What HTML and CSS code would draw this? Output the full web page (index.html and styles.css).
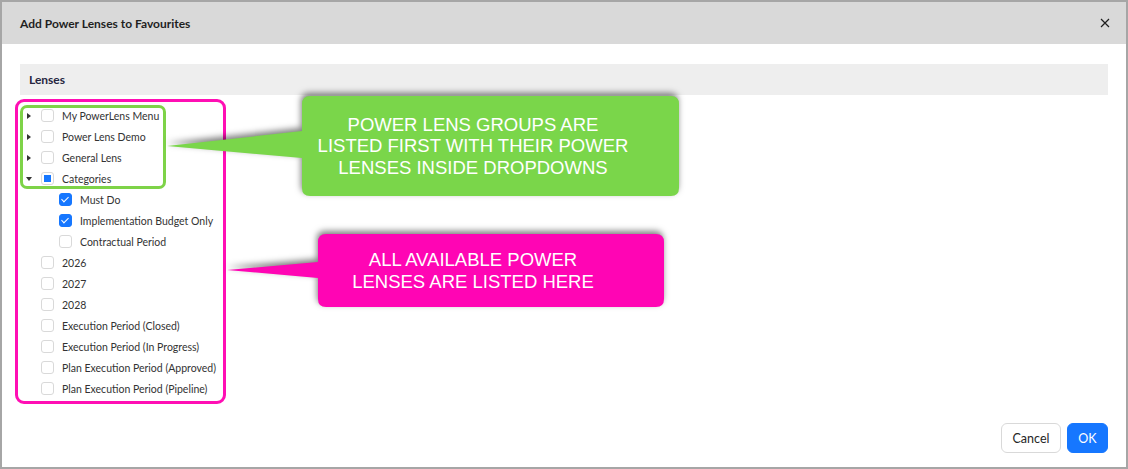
FILE: index.html
```html
<!DOCTYPE html>
<html lang="en">
<head>
    <meta charset="UTF-8">
    <title>Add Power Lenses to Favourites</title>
    <link rel="stylesheet" href="styles.css">
</head>
<body>
    <div class="frame">
        <div class="header">
            <span class="title">Add Power Lenses to Favourites</span>
            <svg class="close" width="10" height="10" viewBox="0 0 10 10">
                <path d="M1 1 L9 9 M9 1 L1 9" stroke="#1f1f1f" stroke-width="1.2" fill="none"/>
            </svg>
        </div>

        <div class="content">
            <div class="section">Lenses</div>

            <ul class="tree">
                <li class="row"><span class="switcher closed"></span><span class="cb"></span><span class="label">My PowerLens Menu</span></li>
                <li class="row"><span class="switcher closed"></span><span class="cb"></span><span class="label">Power Lens Demo</span></li>
                <li class="row"><span class="switcher closed"></span><span class="cb"></span><span class="label">General Lens</span></li>
                <li class="row"><span class="switcher open"></span><span class="cb half"></span><span class="label">Categories</span></li>
                <li class="row child"><span class="switcher"></span><span class="cb checked"></span><span class="label">Must Do</span></li>
                <li class="row child"><span class="switcher"></span><span class="cb checked"></span><span class="label">Implementation Budget Only</span></li>
                <li class="row child"><span class="switcher"></span><span class="cb"></span><span class="label">Contractual Period</span></li>
                <li class="row"><span class="switcher"></span><span class="cb"></span><span class="label">2026</span></li>
                <li class="row"><span class="switcher"></span><span class="cb"></span><span class="label">2027</span></li>
                <li class="row"><span class="switcher"></span><span class="cb"></span><span class="label">2028</span></li>
                <li class="row"><span class="switcher"></span><span class="cb"></span><span class="label">Execution Period (Closed)</span></li>
                <li class="row"><span class="switcher"></span><span class="cb"></span><span class="label">Execution Period (In Progress)</span></li>
                <li class="row"><span class="switcher"></span><span class="cb"></span><span class="label">Plan Execution Period (Approved)</span></li>
                <li class="row"><span class="switcher"></span><span class="cb"></span><span class="label">Plan Execution Period (Pipeline)</span></li>
            </ul>
        </div>

        <div class="footer">
            <button class="btn">Cancel</button>
            <button class="btn primary">OK</button>
        </div>

        <!-- annotations drawn over the dialog -->
        <div class="mark mark-all"></div>
        <div class="mark mark-groups"></div>

        <svg class="callout-shape" width="1128" height="469" viewBox="0 0 1128 469">
            <path class="shape-green" d="M167 146 L302 131 L302 104 Q302 96 310 96 L671 96 Q679 96 679 104 L679 188 Q679 196 671 196 L310 196 Q302 196 302 188 L302 158 Z"/>
            <path class="shape-pink" d="M227 270 L318 262 L318 242 Q318 234 326 234 L656 234 Q664 234 664 242 L664 299 Q664 307 656 307 L326 307 Q318 307 318 299 L318 278 Z"/>
        </svg>
        <div class="callout-text green-text">POWER LENS GROUPS ARE<br>LISTED FIRST WITH THEIR POWER<br>LENSES INSIDE DROPDOWNS</div>
        <div class="callout-text pink-text">ALL AVAILABLE POWER<br>LENSES ARE LISTED HERE</div>
    </div>
</body>
</html>
```

FILE: styles.css
```css
body {
    margin: 0;
    padding: 0;
    font-family: Lato, 'Open Sans', sans-serif;
    color: #262626;
}

.frame {
    position: relative;
    width: 1128px;
    height: 469px;
    box-sizing: border-box;
    border: 2px solid #a6a6a6;
    display: flex;
    flex-direction: column;
    background: #fff;
    overflow: hidden;
}

.header {
    height: 42px;
    flex-shrink: 0;
    background-color: #d9d9d9;
    display: flex;
    align-items: center;
    justify-content: space-between;
    padding: 0 18px;
}

.title {
    font-size: 12px;
    font-weight: bold;
    color: #1f1f1f;
}

.close {
    margin-right: -2px;
}

.content {
    flex: 1;
    padding: 20px 18px 0;
}

.section {
    height: 31px;
    background-color: #eeeeee;
    display: flex;
    align-items: center;
    padding-left: 9px;
    font-size: 12px;
    font-weight: bold;
    color: #262640;
}

.tree {
    list-style: none;
    margin: 10px 0 0;
    padding: 0;
}

.row {
    height: 21px;
    display: flex;
    align-items: center;
    font-size: 10.5px;
    color: #333;
}

.row.child {
    padding-left: 18px;
}

.switcher {
    width: 17px;
    height: 21px;
    margin-right: 4px;
    position: relative;
    flex-shrink: 0;
}

.switcher.closed::after {
    content: '';
    position: absolute;
    left: 7px;
    top: 8px;
    border-left: 4px solid #333;
    border-top: 3px solid transparent;
    border-bottom: 3px solid transparent;
}

.switcher.open::after {
    content: '';
    position: absolute;
    left: 6px;
    top: 9px;
    border-top: 4px solid #333;
    border-left: 3px solid transparent;
    border-right: 3px solid transparent;
}

.cb {
    width: 13px;
    height: 13px;
    box-sizing: border-box;
    border: 1px solid #d9d9d9;
    border-radius: 3px;
    background: #fff;
    margin-right: 8px;
    position: relative;
    flex-shrink: 0;
}

.cb.checked {
    background-color: #1677ff;
    border-color: #1677ff;
}

.cb.checked::after {
    content: '';
    position: absolute;
    left: 3px;
    top: 1px;
    width: 3px;
    height: 6px;
    border: solid #fff;
    border-width: 0 1.5px 1.5px 0;
    transform: rotate(45deg);
}

.cb.half::after {
    content: '';
    position: absolute;
    left: 2px;
    top: 2px;
    width: 7px;
    height: 7px;
    background-color: #1677ff;
}

.footer {
    display: flex;
    justify-content: flex-end;
    gap: 6px;
    padding: 0 18px 14px;
}

.btn {
    height: 30px;
    width: 60px;
    font-family: Lato, 'Open Sans', sans-serif;
    font-size: 12.5px;
    color: #262626;
    background: #fff;
    border: 1px solid #d9d9d9;
    border-radius: 6px;
    cursor: pointer;
}

.btn.primary {
    width: 41px;
    color: #fff;
    background-color: #1677ff;
    border-color: #1677ff;
}

/* annotations */
.mark {
    position: absolute;
    box-sizing: border-box;
    pointer-events: none;
}

.mark-all {
    left: 13px;
    top: 97px;
    width: 211px;
    height: 305px;
    border: 3px solid #ff0fb4;
    border-radius: 9px;
}

.mark-groups {
    left: 18px;
    top: 103px;
    width: 146px;
    height: 84px;
    border: 3px solid #7ed348;
    border-radius: 7px;
}

.callout-shape {
    position: absolute;
    left: -2px;
    top: -2px;
    pointer-events: none;
}

.shape-green {
    fill: #7ad64a;
    filter: drop-shadow(-1px -3px 3px rgba(0, 0, 0, 0.5));
}

.shape-pink {
    fill: #ff05b4;
    filter: drop-shadow(-1px -3px 3px rgba(0, 0, 0, 0.5));
}

.callout-text {
    position: absolute;
    display: flex;
    align-items: center;
    justify-content: center;
    text-align: center;
    color: #fff;
    font-family: 'Liberation Sans', Arial, sans-serif;
    font-size: 18.5px;
    line-height: 21.5px;
}

.green-text {
    left: 298px;
    top: 94px;
    width: 346px;
    height: 100px;
}

.pink-text {
    left: 298px;
    top: 232px;
    width: 346px;
    height: 73px;
}
```
